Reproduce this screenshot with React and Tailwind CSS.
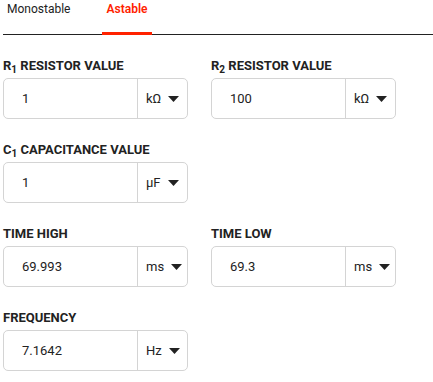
import React from 'react';

function Caret() {
    return (
        <svg width="11" height="6" viewBox="0 0 11 6" className="shrink-0">
            <path d="M0 0 L11 0 L5.5 6 Z" fill="#222" />
        </svg>
    );
}

function Field({ label, value, unit }) {
    return (
        <div className="w-[185px]">
            <div className="h-[16px] whitespace-nowrap text-[13px] font-bold uppercase leading-[16px] text-[#222]">{label}</div>
            <div className="mt-[4px] flex h-[41px] rounded-[5px] border border-[#d4d4d4] bg-white">
                <div className="flex flex-1 items-center pl-[18px] text-[13px] text-[#222]">{value}</div>
                <div className="flex w-[50px] items-center gap-[7px] border-l border-[#d4d4d4] pl-[8px] text-[13px] text-[#222]">
                    <span>{unit}</span>
                    <Caret />
                </div>
            </div>
        </div>
    );
}

function Sub({ children }) {
    return <span className="relative top-[3px] text-[10px]">{children}</span>;
}

export default function App() {
    return (
        <div className="h-[382px] w-[433px] overflow-hidden bg-white font-['Roboto',sans-serif]">
            <div className="ml-[3px] flex h-[35px] border-b border-[#222]">
                <div className="w-[99px] pl-[4px] pt-[1px] text-[12px] leading-[16px] text-[#222]">Monostable</div>
                <div className="relative w-[50px] pt-[1px] text-center text-[12px] font-semibold leading-[16px] text-[#ff2200]">
                    Astable
                    <div className="absolute bottom-[-1px] left-0 h-[3px] w-full bg-[#ff2200]" />
                </div>
            </div>

            <div className="flex flex-col gap-[23px] px-[3px] pt-[23px]">
                <div className="flex gap-[23px]">
                    <Field label={<>R<Sub>1</Sub> Resistor value</>} value="1" unit="kΩ" />
                    <Field label={<>R<Sub>2</Sub> Resistor value</>} value="100" unit="kΩ" />
                </div>
                <div className="flex gap-[23px]">
                    <Field label={<>C<Sub>1</Sub> Capacitance value</>} value="1" unit="µF" />
                </div>
                <div className="flex gap-[23px]">
                    <Field label="Time high" value="69.993" unit="ms" />
                    <Field label="Time low" value="69.3" unit="ms" />
                </div>
                <div className="flex gap-[23px]">
                    <Field label="Frequency" value="7.1642" unit="Hz" />
                </div>
            </div>
        </div>
    );
}
